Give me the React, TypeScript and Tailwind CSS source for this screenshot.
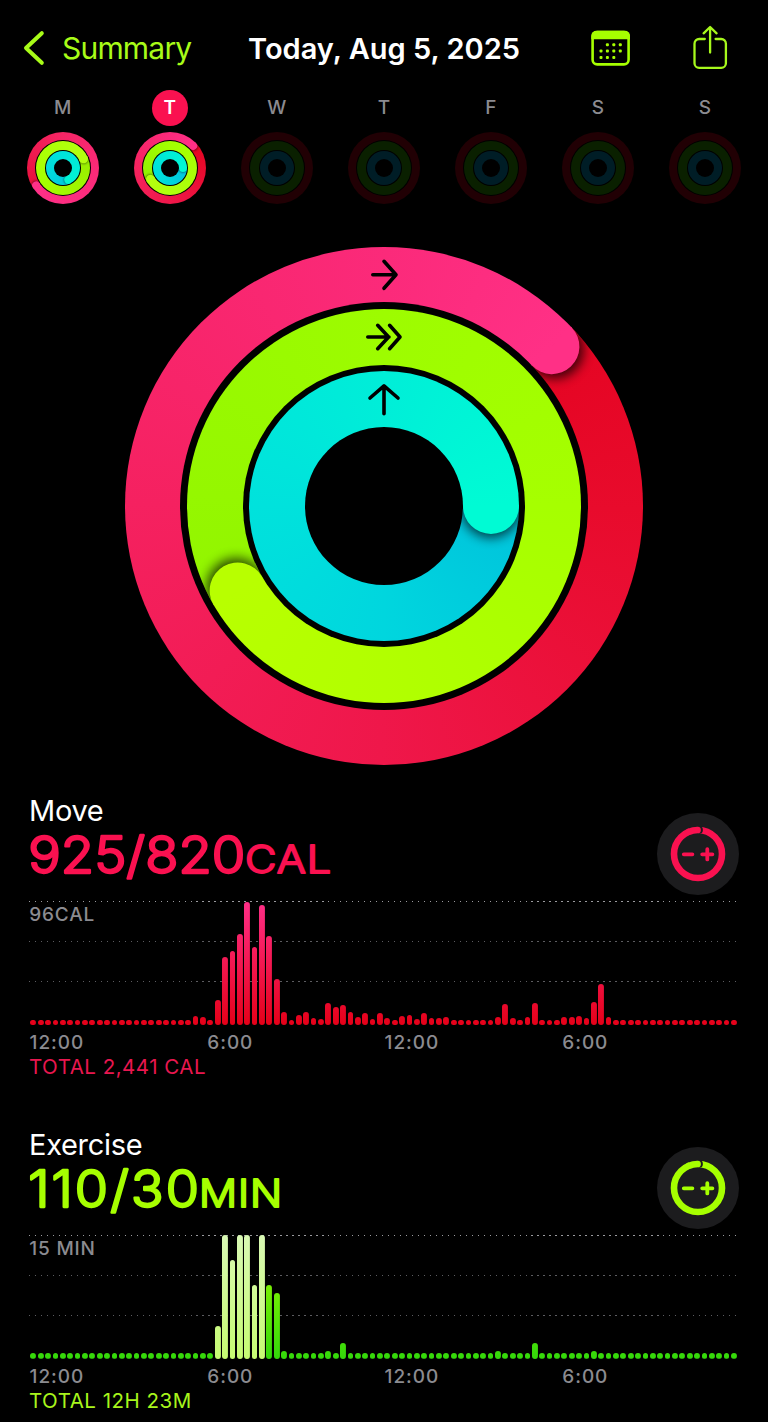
import type { ReactNode } from 'react';

type Cap = { angle: number; mid: number; width: number; color: string };

const polar = (r: number, deg: number): [number, number] => {
  const a = (deg * Math.PI) / 180;
  return [r * Math.sin(a), -r * Math.cos(a)];
};

/* Rounded leading end of a ring, with the shadow it throws on the lap below. */
function RingCap({ id, cap, shade }: { id: string; cap: Cap; shade: number }) {
  const { angle, mid, width, color } = cap;
  const r = width / 2;
  const outer = mid + r;
  const inner = mid - r;
  const back = angle - 60 / mid;
  const [bx, by] = polar(outer, back);
  const [jx, jy] = polar(inner, back);
  const [ox, oy] = polar(outer, angle);
  const [ix, iy] = polar(inner, angle);
  const [ox2, oy2] = polar(outer, angle + 70);
  const [ix2, iy2] = polar(inner, angle + 70);
  const [sx, sy] = polar(mid, angle + 1);
  return (
    <g>
      <defs>
        <clipPath id={id}>
          <path d={`M${ix} ${iy}L${ox} ${oy}A${outer} ${outer} 0 0 1 ${ox2} ${oy2}L${ix2} ${iy2}A${inner} ${inner} 0 0 0 ${ix} ${iy}Z`} />
        </clipPath>
        <filter id={`${id}-blur`} x="-50%" y="-50%" width="200%" height="200%">
          <feGaussianBlur stdDeviation={width * 0.1} />
        </filter>
      </defs>
      <g clipPath={`url(#${id})`}>
        <circle cx={sx} cy={sy} r={r * 1.06} fill="#000" opacity={shade} filter={`url(#${id}-blur)`} />
      </g>
      <path d={`M${jx} ${jy}L${ix} ${iy}A${r} ${r} 0 0 0 ${ox} ${oy}L${bx} ${by}Z`} fill={color} />
    </g>
  );
}

function Rings({ className, disks, caps, view, id, shade, children }: {
  className: string; disks: string[]; caps: Cap[]; view: number; id: string; shade: number; children?: ReactNode;
}) {
  return (
    <div className={`grid place-items-center ${className}`}>
      {disks.map((d, i) => (
        <div key={i} className={`[grid-area:1/1] rounded-full ${d}`} />
      ))}
      <svg className="[grid-area:1/1] w-full h-full" viewBox={`${-view} ${-view} ${view * 2} ${view * 2}`}>
        {caps.map((c, i) => (
          <RingCap key={i} id={`${id}-${i}`} cap={c} shade={shade} />
        ))}
        {children}
      </svg>
    </div>
  );
}

const mondayDisks = [
  'size-[72px] bg-[conic-gradient(from_237deg,#e8103a,#f62565_120deg,#fa2a78_220deg,#ff3088)]',
  'size-[56px] bg-black',
  'size-[54px] bg-[conic-gradient(from_66deg,#98ee00,#a6ff00_180deg,#b4ff10)]',
  'size-[36px] bg-black',
  'size-[34px] bg-[conic-gradient(from_156deg,#00c8dc,#00dcdc_120deg,#00f5d4)]',
  'size-[18px] bg-black',
];
const tuesdayDisks = [
  'size-[72px] bg-[conic-gradient(from_46deg,#e50520,#ef174a_134deg,#f6235f_224deg,#fb2a7c_314deg,#ff3086)]',
  'size-[56px] bg-black',
  'size-[54px] bg-[conic-gradient(from_240deg,#90f200,#a2ff00_120deg,#b4ff10)]',
  'size-[36px] bg-black',
  'size-[34px] bg-[conic-gradient(from_90deg,#00c2de,#00dcdc_120deg,#00f8d4)]',
  'size-[18px] bg-black',
];
const emptyDisks = [
  'size-[72px] bg-[#210004]',
  'size-[56px] bg-black',
  'size-[54px] bg-[#0a2000]',
  'size-[36px] bg-black',
  'size-[34px] bg-[#001d26]',
  'size-[18px] bg-black',
];
const mainDisks = [
  'size-[518px] bg-[conic-gradient(from_46.5deg,#e50422,#e80b2c_44deg,#ef174a_134deg,#f52160_224deg,#fb2a7a_314deg,#ff3086)]',
  'size-[408px] bg-black',
  'size-[394px] bg-[conic-gradient(from_240deg,#92f500,#9dfc00_120deg,#a6ff00_210deg,#b2ff00_300deg,#b8ff00)]',
  'size-[282px] bg-black',
  'size-[270px] bg-[conic-gradient(from_90deg,#00c3dc,#00d6de_90deg,#00e2dc_180deg,#00eed8_270deg,#00fbd4)]',
  'size-[158px] bg-black',
];

const days = [
  { letter: 'M', disks: mondayDisks, caps: [
    { angle: 237, mid: 32, width: 8, color: '#ff3088' },
    { angle: 66, mid: 22.5, width: 9, color: '#b4ff10' },
    { angle: 156, mid: 13, width: 8, color: '#00f5d4' },
  ] },
  { letter: 'T', today: true, disks: tuesdayDisks, caps: [
    { angle: 46.5, mid: 32, width: 8, color: '#ff3086' },
    { angle: 240, mid: 22.5, width: 9, color: '#b4ff10' },
    { angle: 90, mid: 13, width: 8, color: '#00f8d4' },
  ] },
  { letter: 'W', disks: emptyDisks, caps: [] },
  { letter: 'T', disks: emptyDisks, caps: [] },
  { letter: 'F', disks: emptyDisks, caps: [] },
  { letter: 'S', disks: emptyDisks, caps: [] },
  { letter: 'S', disks: emptyDisks, caps: [] },
] as { letter: string; today?: boolean; disks: string[]; caps: Cap[] }[];

const DOT = 5.8;

const fill = (values: Record<number, number>) =>
  Array.from({ length: 96 }, (_, i) => values[i] ?? DOT);

const moveBars = fill({
  22: 9.3, 23: 8, 25: 25, 26: 68.3, 27: 74.3, 28: 91.3, 29: 123.3, 30: 78, 31: 120, 32: 89.3, 33: 46.3,
  34: 13, 36: 10.3, 37: 13, 38: 7.7, 39: 6.7, 40: 22, 41: 18, 42: 20, 43: 13, 44: 8.3, 45: 12, 46: 6.3,
  47: 12, 48: 7.7, 50: 9.3, 51: 10, 52: 6.7, 53: 12.3, 54: 7.3, 55: 7.7, 56: 8.7, 63: 8, 64: 21.3, 65: 7.3,
  67: 8, 68: 22.3, 72: 8.7, 73: 8.7, 74: 9, 75: 7.3, 76: 23.7, 77: 41.3, 78: 8.7,
});
const exerciseBars = fill({
  25: 33.3, 26: 124, 27: 99, 28: 124, 29: 124, 30: 74.3, 31: 124, 32: 74.3, 33: 66, 34: 8.3,
  40: 8.3, 42: 16.3, 63: 8.3, 68: 16.3, 76: 8.3,
});

const dotStrong = 'h-px bg-[repeating-linear-gradient(90deg,#9a9a9e_0_1.4px,transparent_1.4px_5.982px)]';
const dotSoft = 'h-px bg-[repeating-linear-gradient(90deg,#5c5c60_0_1.4px,transparent_1.4px_5.982px)]';

function Chart({ bars, limit, barClass }: { bars: number[]; limit: string; barClass: (i: number) => string }) {
  return (
    <div>
      <div className="grid h-[124.3px]">
        <div className="[grid-area:1/1] ml-[28.8px] mr-[31px]">
          <div className={dotStrong} />
          <div className="h-[39px] pt-px pl-[0.5px] text-[19px] leading-[24px] font-medium tracking-[0.8px] text-[#8b8b90]">{limit}</div>
          <div className={dotSoft} />
          <div className="h-[39px]" />
          <div className={dotSoft} />
        </div>
        <div className="[grid-area:1/1] ml-[30.4px] w-[707.2px] flex items-end justify-between">
          {bars.map((h, i) => (
            <div
              key={i}
              className={`w-[5.8px] rounded-full [background-size:100%_124px] bg-bottom bg-no-repeat ${barClass(i)}`}
              style={{ height: h }}
            />
          ))}
        </div>
      </div>
      <div className="mt-[6px] pl-[29.6px] flex h-[24px] text-[19px] leading-[24px] font-medium tracking-[0.95px] text-[#8b8b90]">
        <span className="w-[177.7px]">12:00</span>
        <span className="w-[177.3px]">6:00</span>
        <span className="w-[177.7px]">12:00</span>
        <span>6:00</span>
      </div>
    </div>
  );
}

function GoalButton({ color }: { color: string }) {
  return (
    <button className="size-[82px] rounded-full bg-[#1c1c1e] grid place-items-center">
      <svg className="size-[60px]" viewBox="-30 -30 60 60" fill="none" strokeLinecap="round">
        <circle r="24" stroke={color} strokeWidth="6.6" />
        <path d="M-6 -23.24A24 24 0 0 1 1.2 -24" stroke="#1c1c1e" strokeWidth="7.4" />
        <path d="M-9 -22.25A24 24 0 0 1 -0.4 -24" stroke={color} strokeWidth="6.6" />
        <path d="M-14.2 0.3H-5.6M4.2 0.3H14.4M9.3 -4.8V5.4" stroke={color} strokeWidth="3.8" />
      </svg>
    </button>
  );
}

function Metric({ title, value, valueWidth, spacing, unit, unitX, unitWidth, color, total, totalClass, children }: {
  title: string; value: string; valueWidth: number; spacing: number; unit: string; unitX: number; unitWidth: number;
  color: string; total: string; totalClass: string; children: ReactNode;
}) {
  return (
    <section className="h-[333.7px]">
      <div className="h-[109px] flex justify-between pl-[29px] pr-[28.7px]">
        <div>
          <h2 className="h-[35px] pt-px text-[29px] leading-[36px] tracking-[-0.3px] text-white">{title}</h2>
          <svg className="w-[320px] h-[72px] overflow-visible" viewBox="0 0 320 72" fill={color} stroke={color} strokeLinejoin="round" strokeLinecap="round">
            <text x="-0.8" y="45.6" fontSize="50" fontWeight="300" strokeWidth="2.3" letterSpacing={spacing} textLength={valueWidth} lengthAdjust="spacingAndGlyphs">{value}</text>
            <text x={unitX} y="45.6" fontSize="37.5" fontWeight="350" strokeWidth="1.9" letterSpacing="0.8" textLength={unitWidth} lengthAdjust="spacingAndGlyphs">{unit}</text>
          </svg>
        </div>
        <div className="pt-[20.7px]">
          <GoalButton color={color} />
        </div>
      </div>
      {children}
      <p className={`-mt-px pl-[29px] text-[20.5px] leading-[26px] tracking-[0.5px] ${totalClass}`}>{total}</p>
    </section>
  );
}

export default function App() {
  return (
    <main className="w-[768px] h-[1422px] bg-black overflow-hidden flex flex-col font-['Inter','Liberation_Sans',sans-serif]">
      <header className="h-[89.7px] shrink-0 pt-[18px]">
        <div className="h-[60px] grid grid-cols-[248px_272px_1fr] items-center">
          <div className="flex items-center pl-[22px]">
            <svg className="w-[24px] h-[38px]" viewBox="0 0 24 38" fill="none" stroke="#a8fb18" strokeWidth="4" strokeLinecap="round" strokeLinejoin="round">
              <path d="M19.8 4.2L4 19L19.8 33.8" />
            </svg>
            <span className="pl-[16px] text-[30px] leading-[36px] tracking-[-0.8px] text-[#a8fb18]">Summary</span>
          </div>
          <h1 className="pt-[2px] text-center whitespace-nowrap text-[29px] leading-[36px] font-semibold text-white">Today, Aug 5, 2025</h1>
          <div className="flex items-center pl-[70px] gap-[60px]">
            <svg className="w-[42px] h-[42px]" viewBox="590 27 42 42">
              <rect x="592.6" y="32" width="36" height="32.4" rx="4.6" fill="none" stroke="#a6ff00" strokeWidth="2.6" />
              <path d="M591.3 39.3V35.7A5 5 0 0 1 596.3 30.7H625A5 5 0 0 1 630 35.7V39.3Z" fill="#a6ff00" />
              {[
                [607.4, 44.7], [613.8, 44.7], [620.3, 44.7],
                [601, 51], [607.4, 51], [613.8, 51], [620.3, 51],
                [601, 57.4], [607.4, 57.4], [613.8, 57.4],
              ].map(([x, y]) => (
                <rect key={`${x}-${y}`} x={x - 1.5} y={y - 1.5} width="3" height="3" rx="1" fill="#a6ff00" />
              ))}
            </svg>
            <svg className="w-[36px] h-[46px]" viewBox="692 25 36 46" fill="none" stroke="#a6f81c" strokeWidth="2.3" strokeLinecap="round" strokeLinejoin="round">
              <path d="M704.8 39H699.2A4.7 4.7 0 0 0 694.5 43.7V63.2A4.7 4.7 0 0 0 699.2 67.9H721.2A4.7 4.7 0 0 0 725.9 63.2V43.7A4.7 4.7 0 0 0 721.2 39H715.6" />
              <path d="M710.1 52.5V27.4M703.6 33.3L710.1 27L716.6 33.3" />
            </svg>
          </div>
        </div>
      </header>

      <nav className="shrink-0 flex gap-[35.05px] pl-[26.7px]">
        {days.map((d, i) => (
          <div key={i} className="w-[72px] flex flex-col items-center gap-[6.6px]">
            <div className={`size-[36px] rounded-full grid place-items-center text-[19px] leading-[24px] ${d.today ? 'bg-[#fa1150] text-white font-semibold' : 'text-[#8b8b90] font-medium'}`}>
              {d.letter}
            </div>
            <Rings className="size-[72px]" disks={d.disks} caps={d.caps} view={36} id={`day${i}`} shade={0.5} />
          </div>
        ))}
      </nav>

      <div className="shrink-0 mt-[43.2px] flex justify-center">
        <Rings
          className="size-[518px]"
          disks={mainDisks}
          view={259}
          id="main"
          shade={0.72}
          caps={[
            { angle: 46.5, mid: 231.5, width: 55, color: '#ff3086' },
            { angle: 240, mid: 169, width: 56, color: '#b8ff00' },
            { angle: 90, mid: 107, width: 56, color: '#00fbd4' },
          ]}
        >
          <g fill="none" stroke="#000" strokeWidth="3.6" strokeLinecap="round" strokeLinejoin="round">
            <path d="M-11.2 -231.2H12M0 -244.7L12 -231.2L0 -217.7" />
            <path d="M-16.2 -169H5M-6.3 -180.7L4.6 -169L-6.3 -157.3M5.6 -180.7L16 -169L5.6 -157.3" />
            <path d="M0 -92.3V-120M-14 -108L0 -120.2L14 -108" />
          </g>
        </Rings>
      </div>

      <div className="shrink-0 mt-[26.7px]">
        <Metric title="Move" value="925/820" valueWidth={217} spacing={0} unit="CAL" unitX={216} unitWidth={87} color="#fa1150" total="TOTAL 2,441 CAL" totalClass="text-[#e8174f]">
          <Chart bars={moveBars} limit="96CAL" barClass={() => 'bg-[linear-gradient(to_top,#e50018,#ff2f88)]'} />
        </Metric>
        <Metric title="Exercise" value="110/30" valueWidth={173} spacing={2} unit="MIN" unitX={170} unitWidth={84} color="#a6ff00" total="TOTAL 12H 23M" totalClass="text-[#a8f51c]">
          <Chart
            bars={exerciseBars}
            limit="15 MIN"
            barClass={(i) => (i >= 25 && i <= 31
              ? 'bg-[linear-gradient(to_top,#c6fb72,#d9f9b4)]'
              : 'bg-[linear-gradient(to_top,#33d80a,#a6ff00)]')}
          />
        </Metric>
      </div>
    </main>
  );
}
